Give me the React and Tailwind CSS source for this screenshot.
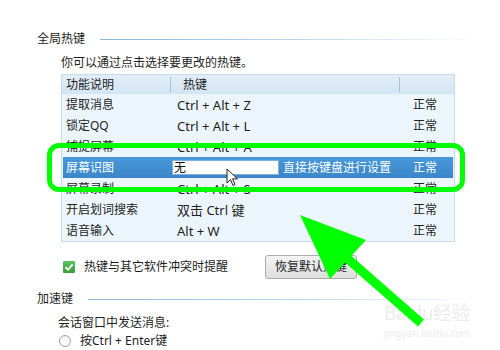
import React from 'react';

const rows = [
  { name: '提取消息', key: 'Ctrl + Alt + Z' },
  { name: '锁定QQ', key: 'Ctrl + Alt + L' },
  { name: '捕捉屏幕', key: 'Ctrl + Alt + A' },
  { name: '屏幕识图', key: '', selected: true },
  { name: '屏幕录制', key: 'Ctrl + Alt + S' },
  { name: '开启划词搜索', key: '双击 Ctrl 键' },
  { name: '语音输入', key: 'Alt + W' },
];

function SectionTitle({ text }) {
  return (
    <div className="flex items-center h-[16px] pl-[37px]">
      <span className="text-[12px] leading-[16px] text-[#1e1e1e]">{text}</span>
      <div className="flex-1 h-px ml-[15px] mr-[20px] bg-gradient-to-r from-[#8ab6da] via-[#b9d5ea] to-white" />
    </div>
  );
}

export default function App() {
  return (
    <div
      className="relative w-[500px] h-[350px] overflow-hidden bg-white text-[#1e1e1e]"
      style={{ fontFamily: '"Noto Sans", "Noto Sans CJK SC", sans-serif' }}
    >
      <div className="pt-[31px]">
        <SectionTitle text="全局热键" />

        <p className="ml-[61px] mt-[8px] text-[12px] leading-[16px]">你可以通过点击选择要更改的热键。</p>

        {/* Hotkey table */}
        <div className="ml-[61px] mt-[3px] w-[394px] border border-[#c5dbeb] bg-[#ebf5fb] text-[12px]">
          <div className="flex h-[19px] items-center bg-gradient-to-b from-[#e2eef8] to-[#d3e5f3]">
            <div className="w-[108px] pl-[4px]">功能说明</div>
            <div className="w-px h-[15px] bg-[#9fc3e0]" />
            <div className="w-[228px] pl-[12px]">热键</div>
            <div className="w-px h-[15px] bg-[#9fc3e0]" />
            <div className="flex-1" />
          </div>
          {rows.map((r) =>
            r.selected ? (
              <div
                key={r.name}
                className="flex h-[21px] items-center mx-px bg-gradient-to-b from-[#4798da] to-[#3a86c8] text-white"
              >
                <div className="w-[107px] pl-[3px]">{r.name}</div>
                <div className="w-[229px] flex items-center pl-[2px]">
                  <div className="w-[107px] h-[15px] bg-white border border-[#7fb0dc] text-[#111] leading-[13px] pl-px">
                    无
                  </div>
                  <span className="ml-[4px]">直接按键盘进行设置</span>
                </div>
                <div className="flex-1 pl-[14px]">正常</div>
              </div>
            ) : (
              <div key={r.name} className="flex h-[21px] items-center">
                <div className="w-[108px] pl-[4px]">{r.name}</div>
                <div className="w-[229px] pl-[7px] text-[13px] leading-[16px]">{r.key}</div>
                <div className="flex-1 pl-[14px]">正常</div>
              </div>
            )
          )}
        </div>

        {/* checkbox + button */}
        <div className="flex items-center mt-[13px] ml-[63px] h-[24px]">
          <div className="w-[12px] h-[12px] rounded-[1px] bg-gradient-to-b from-[#5cc35c] to-[#3a9d3a] flex items-center justify-center">
            <svg width="10" height="10" viewBox="0 0 10 10">
              <path d="M1.5 5.2 L4 7.6 L8.6 2.4" stroke="white" strokeWidth="1.8" fill="none" />
            </svg>
          </div>
          <span className="ml-[9px] text-[12px]">热键与其它软件冲突时提醒</span>
          <button className="ml-[37px] h-[24px] w-[92px] rounded-[3px] border border-[#acacac] bg-gradient-to-b from-[#f4f4f4] to-[#dedede] text-[12px] text-[#1e1e1e]">
            恢复默认热键
          </button>
        </div>

        <div className="mt-[12px]">
          <SectionTitle text="加速键" />
        </div>

        <p className="ml-[58px] mt-[8px] text-[12px] leading-[16px]">会话窗口中发送消息:</p>

        <div className="flex items-center ml-[59px] mt-[3px] h-[14px]">
          <div className="w-[12px] h-[12px] rounded-full border border-[#a0a0a0] bg-gradient-to-b from-[#f2f2f2] to-white" />
          <span className="ml-[9px] text-[12px] leading-[14px]">按Ctrl + Enter键</span>
        </div>
      </div>

      {/* watermark */}
      <div className="absolute left-[384px] top-[304px] text-[#ececec] leading-none">
        <div className="text-[19px] tracking-tight">Baidu经验</div>
        <div className="text-[10px] mt-[5px]">jingyan.baidu.com</div>
      </div>

      {/* mouse cursor */}
      <svg className="absolute left-[226px] top-[168px]" width="14" height="20" viewBox="0 0 14 20">
        <path d="M1 1 L1 15 L4.5 11.5 L7 17.5 L9 16.6 L6.6 10.8 L11.5 10.8 Z" fill="white" stroke="#222" strokeWidth="1" />
      </svg>

      {/* green highlight box */}
      <div className="absolute left-[47px] top-[143px] w-[418px] h-[49px] rounded-[12px] border-[5px] border-[#00ff00]" />

      {/* green arrow */}
      <svg className="absolute left-0 top-0" width="500" height="350">
        <polygon points="300,215 366,240 330,279" fill="#00ff00" />
        <line x1="340" y1="252" x2="421" y2="323" stroke="#00ff00" strokeWidth="9" />
      </svg>
    </div>
  );
}
